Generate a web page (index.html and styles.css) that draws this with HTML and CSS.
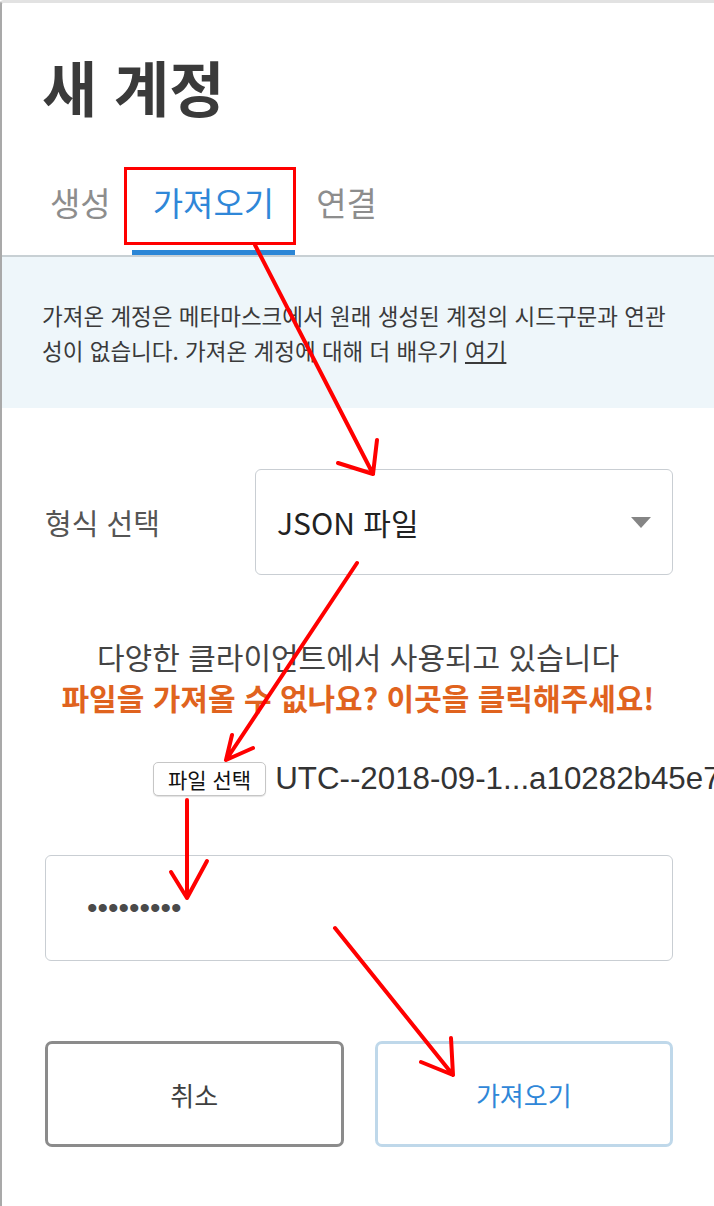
FILE: index.html
```html
<!DOCTYPE html>
<html lang="ko">
<head>
<meta charset="utf-8">
<title>새 계정</title>
<link rel="stylesheet" href="styles.css">
</head>
<body>
<div class="frame">
  <h1 class="title">새 계정</h1>
  <nav class="tabs">
    <div class="tab">생성</div>
    <div class="tab active">가져오기</div>
    <div class="tab">연결</div>
  </nav>
  <div class="notice">가져온 계정은 메타마스크에서 원래 생성된 계정의 시드구문과 연관성이 없습니다. 가져온 계정에 대해 더 배우기 <a class="link">여기</a></div>
  <div class="select-row">
    <span class="select-label">형식 선택</span>
    <div class="select"><span>JSON 파일</span><span class="caret"></span></div>
  </div>
  <p class="used">다양한 클라이언트에서 사용되고 있습니다</p>
  <p class="help">파일을 가져올 수 없나요? 이곳을 클릭해주세요!</p>
  <div class="file-row"><span class="file-btn">파일 선택</span><span class="file-name">UTC--2018-09-1...a10282b45e7</span></div>
  <div class="password"><span class="dots">•••••••••</span></div>
  <div class="actions">
    <button class="btn cancel">취소</button>
    <button class="btn import">가져오기</button>
  </div>
</div>
<svg class="annot" width="714" height="1206" viewBox="0 0 714 1206">
  <rect x="125.5" y="168.5" width="169" height="75" fill="none" stroke="#ff0000" stroke-width="3"/>
  <g fill="none" stroke="#ff0000" stroke-width="4" stroke-linecap="round" stroke-linejoin="round">
    <path d="M255 245 L373 474 M338 463 L373 474 L377 440"/>
    <path d="M357 563 L226 760 M232 735 L226 760 L253 748"/>
    <path d="M187 800 L187 898 M171 872 L187 898 L207 861"/>
    <path d="M335 928 L453 1075 M421 1062 L453 1075 L451 1038"/>
  </g>
</svg>
</body>
</html>
```

FILE: styles.css
```css
html, body {
  margin: 0;
  padding: 0;
}
body {
  background: #ffffff;
  font-family: "Noto Sans CJK KR", "Noto Sans", sans-serif;
  overflow: hidden;
  width: 714px;
  height: 1206px;
  position: relative;
}
.frame {
  box-sizing: border-box;
  height: 1206px;
  border-top: 3px solid #e2e2e2;
  border-left: 2px solid #a9a9a9;
  border-top-left-radius: 4px;
  overflow: hidden;
}
.title {
  margin: 0;
  padding: 48px 0 0 40px;
  font-size: 60px;
  line-height: 70px;
  font-weight: 700;
  color: #3a3a3a;
}
.tabs {
  display: flex;
  margin-top: 61px;
  padding-left: 27px;
  border-bottom: 2px solid #c8d0d4;
}
.tab {
  padding: 0 21px 28px;
  font-size: 33px;
  line-height: 40px;
  color: #8d8d8d;
  border-bottom: 5px solid transparent;
}
.tab.active {
  color: #2f87d8;
  border-bottom-color: #2b86d6;
}
.notice {
  background: #eef6fa;
  padding: 41px 42px 40px 40px;
  font-size: 22.5px;
  line-height: 35px;
  color: #3a3a3a;
}
.link {
  color: #3a3a3a;
  text-decoration: underline;
}
.select-row {
  display: flex;
  align-items: center;
  margin-top: 61px;
  padding: 0 41px 0 43px;
}
.select-label {
  width: 210px;
  font-size: 29px;
  color: #555555;
}
.select {
  flex: 1;
  box-sizing: border-box;
  height: 106px;
  border: 1px solid #c9ced3;
  border-radius: 6px;
  display: flex;
  align-items: center;
  justify-content: space-between;
  padding: 0 21px 0 21px;
  font-size: 30px;
  color: #222222;
}
.caret {
  width: 0;
  height: 0;
  border-left: 10px solid transparent;
  border-right: 10px solid transparent;
  border-top: 11px solid #858585;
}
.used {
  margin: 61px 0 0;
  text-align: center;
  font-size: 30px;
  line-height: 41px;
  color: #444444;
}
.help {
  margin: 0;
  text-align: center;
  font-size: 30px;
  line-height: 41px;
  font-weight: 700;
  color: #e0631e;
}
.file-row {
  display: flex;
  align-items: center;
  height: 40px;
  margin-top: 41px;
  padding-left: 151px;
  white-space: nowrap;
}
.file-btn {
  box-sizing: border-box;
  height: 34px;
  padding: 0 14px;
  display: inline-flex;
  align-items: center;
  font-size: 21px;
  color: #111111;
  background: #ffffff;
  border: 1px solid #c6c6c6;
  border-radius: 5px;
  box-shadow: 0 1px 1px rgba(0, 0, 0, 0.12);
}
.file-name {
  margin-left: 9px;
  font-family: "Liberation Sans", Arial, sans-serif;
  font-size: 31.3px;
  color: #333333;
}
.password {
  box-sizing: border-box;
  height: 106px;
  margin: 56px 41px 0 43px;
  border: 1px solid #c9ced3;
  border-radius: 6px;
  display: flex;
  align-items: center;
  padding-left: 41px;
}
.dots {
  font-family: "Liberation Sans", Arial, sans-serif;
  font-size: 30px;
  color: #4a4a4a;
}
.actions {
  display: grid;
  grid-template-columns: 1fr 1fr;
  gap: 31px;
  margin-top: 80px;
  padding: 0 41px 0 43px;
}
.btn {
  height: 106px;
  background: #ffffff;
  border: 3px solid;
  border-radius: 7px;
  font-family: "Noto Sans CJK KR", "Noto Sans", sans-serif;
  font-size: 26px;
}
.btn.cancel {
  border-color: #8b8b8b;
  color: #3f3f3f;
}
.btn.import {
  border-color: #bfd8ea;
  color: #2f87d8;
}
.annot {
  position: absolute;
  top: 0;
  left: 0;
  pointer-events: none;
}
```
